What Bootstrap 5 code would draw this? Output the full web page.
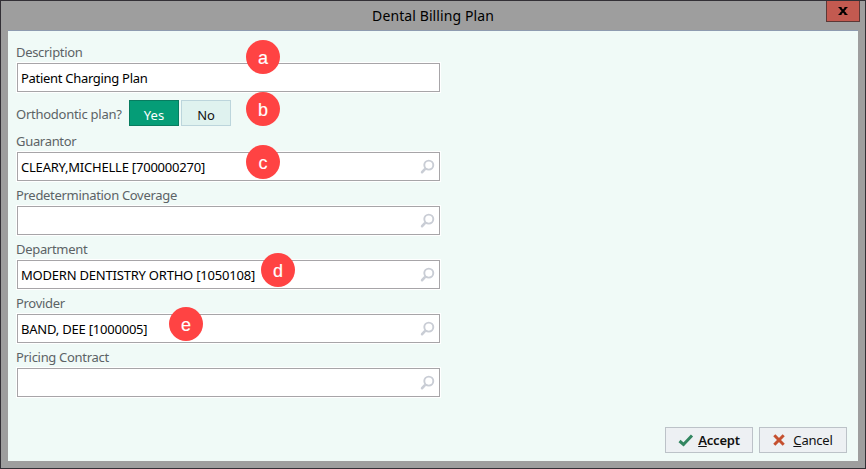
<!DOCTYPE html>
<html lang="en">
<head>
<meta charset="utf-8">
<meta name="viewport" content="width=device-width, initial-scale=1">
<title>Dental Billing Plan</title>
<link href="https://cdn.jsdelivr.net/npm/bootstrap@5.3.0/dist/css/bootstrap.min.css" rel="stylesheet">
<style>
body{font-family:"Noto Sans","Open Sans",sans-serif;font-size:13px;line-height:18px;color:#000;overflow:hidden}
.dialog-win{width:866px;height:469px;background:#9e9e9e;border:1px solid #333036;padding:0 7px 7px}
.title-bar{height:29px;font-size:14px;letter-spacing:.1px;padding-top:1px}
.close-btn{width:34px;height:21px;right:-2px;top:0;background:#c35a50;border:1px solid #5c3836;border-top:0;border-radius:0}
.pane{background:#f0faf7;border-top:1px solid #8e9bb0;padding:12px 11px 8px 8px}
.form-area{width:424px}
.field-label{height:20px;color:#5c6366;font-size:13px;letter-spacing:-.31px;margin:0}
.field-box{height:29px;margin:0 0 5px 1px;border:1px solid #a7a5a8;background:#fff;box-shadow:0 0 0 1px #fff;padding:1px 4px 0 3px;letter-spacing:-.3px}
.field-box span{letter-spacing:-.21px}
.toggle-row{height:35px;padding-top:3px}
.toggle-label{width:113px;padding-top:5px;letter-spacing:-.26px}
.toggle-set{gap:2px}
.toggle-row .btn,.action-btn{border-radius:0;font-size:13px;line-height:18px;color:#111}
.toggle-row .btn{width:50px;height:26px;padding:4px 0 0;background:#dff2ef;border:1px solid #bcd5dc}
.toggle-row .btn.chosen{background:#059d77;border-color:#087c60;color:#fff}
.action-row{gap:6px}
.action-btn{width:88px;height:26px;padding:0;background:#edf0f3;border:1px solid #bcc2c8;letter-spacing:-.2px}
.marker{width:34px;height:34px;background:#ff4343;color:#fff;font:18px/34px "Liberation Sans",Arial,sans-serif;-webkit-text-stroke:.15px #fff;padding-top:1px}
.m-a{left:246px;top:40px}.m-b{left:246px;top:92px}.m-c{left:246px;top:145px}.m-d{left:261px;top:253px}.m-e{left:169px;top:307px}
</style>
</head>
<body>
<svg class="d-none"><symbol id="lens" viewBox="0 0 16 16"><circle cx="9.8" cy="6.1" r="4.5" fill="none" stroke="#c9cdd5" stroke-width="1.9"/><path d="M5.7 10.3 3.1 13.2" stroke="#c9cdd5" stroke-width="2.6" stroke-linecap="round"/></symbol></svg>
<main class="dialog-win position-relative d-flex flex-column">
  <header class="title-bar position-relative d-flex align-items-center justify-content-center">
    <span>Dental Billing Plan</span>
    <button class="close-btn btn p-0 position-absolute d-flex align-items-center justify-content-center" aria-label="Close"><svg width="10" height="8" viewBox="0 0 10 8"><path d="M2 .8 8 7.2M8 .8 2 7.2" stroke="#000" stroke-width="2"/><path d="M.5.5h3M6.5.5h3M.5 7.5h3M6.5 7.5h3" stroke="#000"/></svg></button>
  </header>
  <section class="pane flex-grow-1 d-flex flex-column">
    <div class="form-area">
      <div class="field-label">Description</div>
      <div class="field-box d-flex align-items-center">Patient Charging Plan</div>
      <div class="toggle-row d-flex"><span class="field-label toggle-label">Orthodontic plan?</span><div class="d-flex toggle-set"><button class="btn chosen">Yes</button><button class="btn">No</button></div></div>
      <div class="field-label">Guarantor</div>
      <div class="field-box d-flex align-items-center justify-content-between"><span>CLEARY,MICHELLE [700000270]</span><svg width="16" height="16"><use href="#lens"/></svg></div>
      <div class="field-label">Predetermination Coverage</div>
      <div class="field-box d-flex align-items-center justify-content-between"><span></span><svg width="16" height="16"><use href="#lens"/></svg></div>
      <div class="field-label">Department</div>
      <div class="field-box d-flex align-items-center justify-content-between"><span>MODERN DENTISTRY ORTHO [1050108]</span><svg width="16" height="16"><use href="#lens"/></svg></div>
      <div class="field-label">Provider</div>
      <div class="field-box d-flex align-items-center justify-content-between"><span>BAND, DEE [1000005]</span><svg width="16" height="16"><use href="#lens"/></svg></div>
      <div class="field-label">Pricing Contract</div>
      <div class="field-box d-flex align-items-center justify-content-between"><span></span><svg width="16" height="16"><use href="#lens"/></svg></div>
    </div>
    <footer class="action-row mt-auto d-flex justify-content-end">
      <button class="action-btn btn d-flex align-items-center justify-content-center fw-semibold"><svg class="me-1" width="16" height="14" viewBox="0 0 16 14"><path d="M1.5 8 5.5 11.5 14 2.5" fill="none" stroke="#328660" stroke-width="3"/></svg><span><u>A</u>ccept</span></button>
      <button class="action-btn btn d-flex align-items-center justify-content-center"><svg class="me-2" width="12" height="12" viewBox="0 0 12 12"><path d="M1.3 1.3 10.7 10.7M10.7 1.3 1.3 10.7" stroke="#c5502f" stroke-width="3"/></svg><span><u>C</u>ancel</span></button>
    </footer>
  </section>
</main>
<span class="marker m-a rounded-circle position-absolute text-center">a</span>
<span class="marker m-b rounded-circle position-absolute text-center">b</span>
<span class="marker m-c rounded-circle position-absolute text-center">c</span>
<span class="marker m-d rounded-circle position-absolute text-center">d</span>
<span class="marker m-e rounded-circle position-absolute text-center">e</span>
<script src="https://cdn.jsdelivr.net/npm/bootstrap@5.3.0/dist/js/bootstrap.bundle.min.js"></script>
</body>
</html>
